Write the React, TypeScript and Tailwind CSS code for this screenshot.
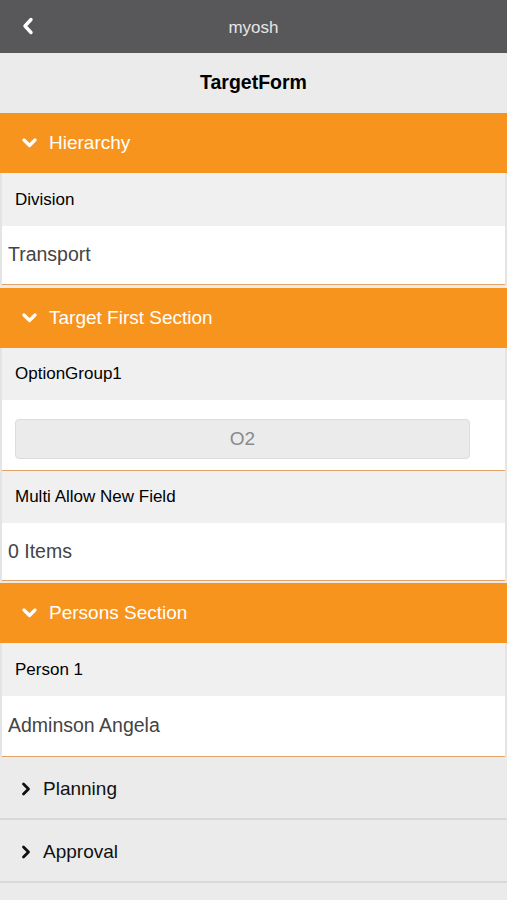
import React from "react";

const font = { fontFamily: '"Liberation Sans", Arial, sans-serif' };

function ChevronDown() {
  return (
    <svg width="15" height="10" viewBox="0 0 15 10" className="shrink-0">
      <path d="M2 2 L7.5 7.5 L13 2" fill="none" stroke="white" strokeWidth="3.2" strokeLinecap="round" strokeLinejoin="round" />
    </svg>
  );
}

function ChevronRight() {
  return (
    <svg width="10" height="14" viewBox="0 0 10 14" className="shrink-0">
      <path d="M2.5 2 L7.5 7 L2.5 12" fill="none" stroke="#111" strokeWidth="2.8" strokeLinecap="round" strokeLinejoin="round" />
    </svg>
  );
}

function SectionHeader({ title }: { title: string }) {
  return (
    <div className="flex items-center h-[60px] bg-[#f7941d] pl-[22px] gap-[12px]">
      <ChevronDown />
      <span className="text-[19px] text-white">{title}</span>
    </div>
  );
}

function Label({ text, h = "h-[53px]" }: { text: string; h?: string }) {
  return (
    <div className={`flex items-center ${h} bg-[#f0f0f0] pl-[13px] text-[17px] text-black`}>{text}</div>
  );
}

function Value({ text, h = "h-[59px]" }: { text: string; h?: string }) {
  return (
    <div className={`flex items-center ${h} bg-white pl-[6px] text-[19.5px] text-[#444] border-b border-[#e3a46a]`}>{text}</div>
  );
}

function Collapsed({ title }: { title: string }) {
  return (
    <div className="flex items-center h-[63px] pt-[3px] bg-[#ebebeb] pl-[21px] gap-[12px] border-b-2 border-[#d9d9d9]">
      <ChevronRight />
      <span className="text-[19px] text-[#111]">{title}</span>
    </div>
  );
}

export default function App() {
  return (
    <div className="w-[507px] h-[900px] bg-[#ebebeb] overflow-hidden" style={font}>
      <div className="relative flex items-center justify-center h-[53px] bg-[#58585a]">
        <svg width="12" height="18" viewBox="0 0 12 18" className="absolute left-[22px] top-[17px]">
          <path d="M9 2.5 L3 9 L9 15.5" fill="none" stroke="white" strokeWidth="3.4" strokeLinecap="round" strokeLinejoin="round" />
        </svg>
        <span className="text-[17px] text-[#e6e6e6] pt-[2px]">myosh</span>
      </div>
      <div className="flex items-center justify-center h-[60px] bg-[#ebebeb]">
        <span className="text-[19.5px] font-bold text-black">TargetForm</span>
      </div>

      <SectionHeader title="Hierarchy" />
      <div className="border-x-2 border-[#e4e4e4] mb-[3px]">
        <Label text="Division" />
        <Value text="Transport" />
      </div>

      <SectionHeader title="Target First Section" />
      <div className="border-x-2 border-[#e4e4e4] mb-[2px]">
        <Label text="OptionGroup1" h="h-[52px]" />
        <div className="flex items-start h-[71px] bg-white pt-[19px] pl-[13px] pr-[35px] border-b border-[#e3a46a]">
          <div className="flex items-center justify-center w-full h-[40px] rounded-[4px] bg-[#ebebeb] border border-[#dcdcdc] text-[19px] text-[#8a8a8a]">
            O2
          </div>
        </div>
        <Label text="Multi Allow New Field" h="h-[52px]" />
        <Value text="0 Items" h="h-[58px]" />
      </div>

      <SectionHeader title="Persons Section" />
      <div className="border-x-2 border-[#e4e4e4]">
        <Label text="Person 1" />
        <Value text="Adminson Angela" h="h-[61px]" />
      </div>

      <Collapsed title="Planning" />
      <Collapsed title="Approval" />
    </div>
  );
}
